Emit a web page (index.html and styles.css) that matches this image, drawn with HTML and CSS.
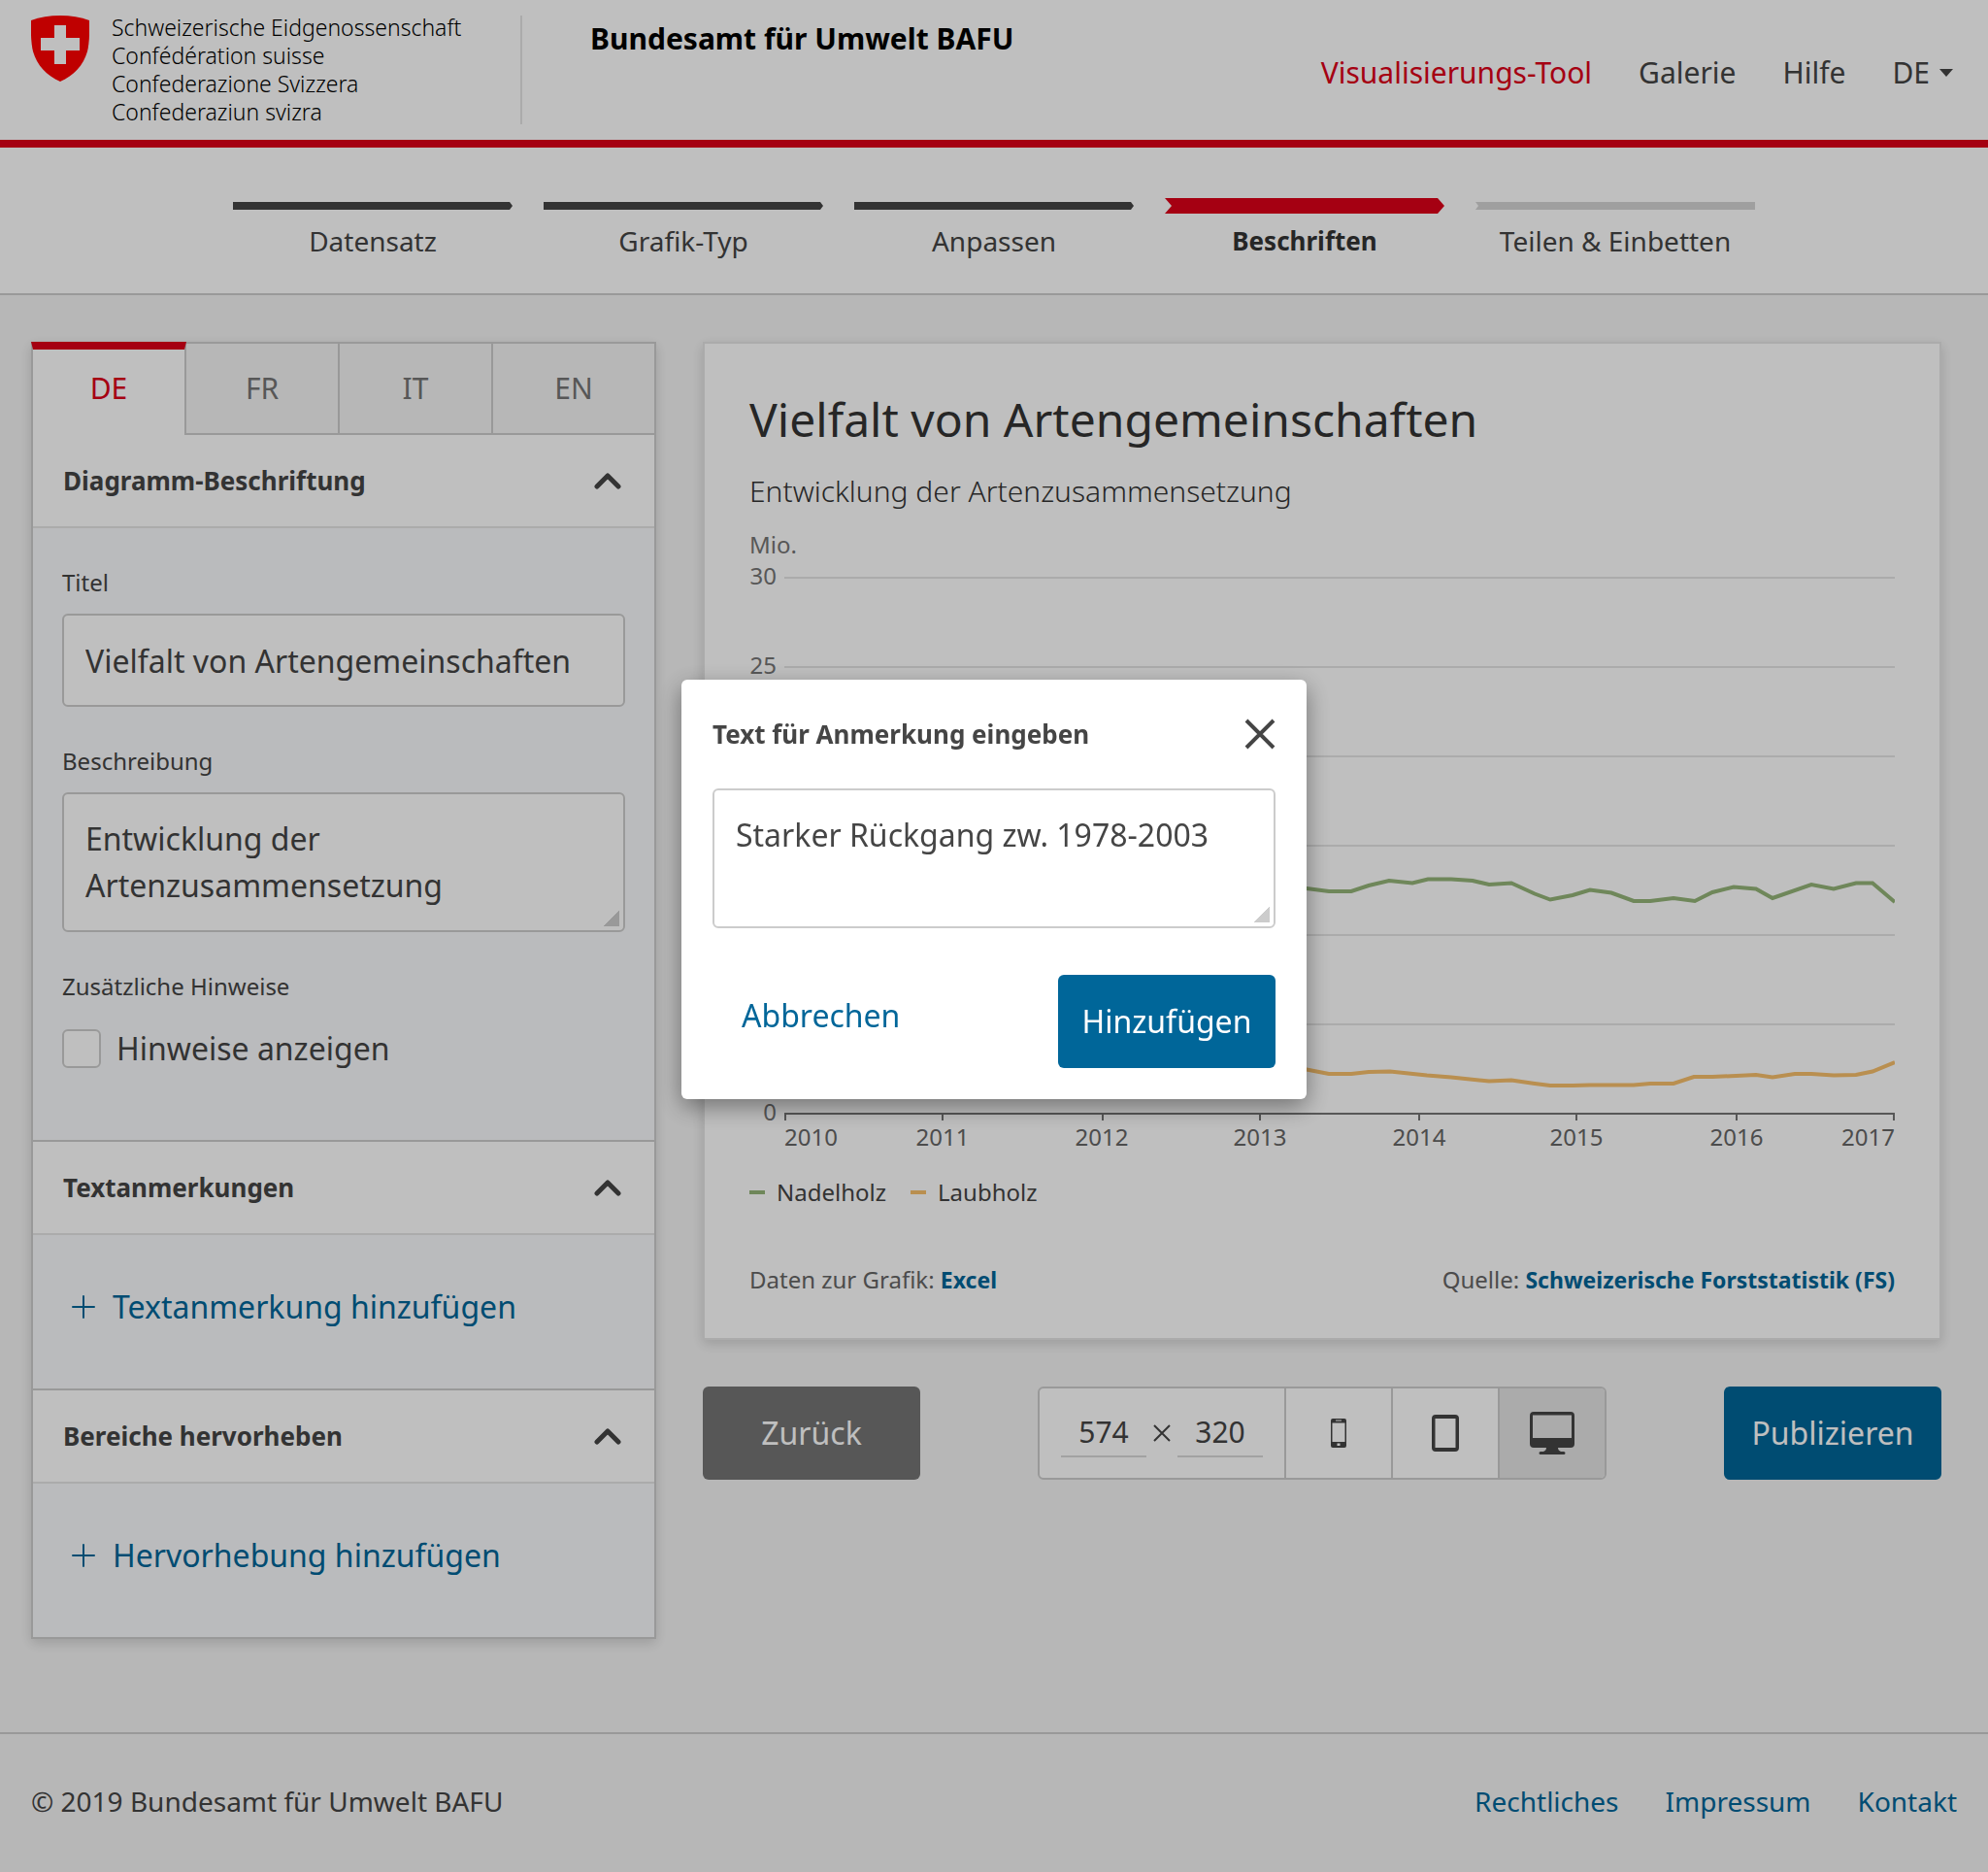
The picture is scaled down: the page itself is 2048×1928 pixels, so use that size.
FILE: index.html
```html
<!DOCTYPE html>
<html lang="de">
<head>
<meta charset="utf-8">
<meta name="viewport" content="width=device-width, initial-scale=1">
<title>Visualisierungs-Tool – Bundesamt für Umwelt BAFU</title>
<link rel="stylesheet" href="styles.css">
</head>
<body>
<header class="header">
  <div class="brand">
    <svg class="brand-shield" viewBox="0 0 60 68" aria-hidden="true">
      <path fill="#ff0000" d="M0 5C9 1.500 19 0 30 0s21 1.500 30 5c.3 11 .2 23-2 32-4 14-14 25-28 31C16 62 6 51 2 37-.2 28-.3 16 0 5z"/>
      <path fill="#fff" d="M24 10h12v13h14v13H36v14H24V36H10V23h14z"/>
    </svg>
    <p class="brand-names"><span>Schweizerische Eidgenossenschaft<br>Confédération suisse<br>Confederazione Svizzera<br>Confederaziun svizra</span></p>
    <p class="brand-office">Bundesamt für Umwelt BAFU</p>
  </div>
  <nav class="nav" aria-label="Hauptnavigation">
    <a class="nav-link nav-link-active" href="#">Visualisierungs-Tool</a>
    <a class="nav-link" href="#">Galerie</a>
    <a class="nav-link" href="#">Hilfe</a>
    <button class="nav-link nav-lang" type="button">DE<svg class="nav-caret" viewBox="0 0 14 8" aria-hidden="true"><path d="M0 0h14L7 8z"/></svg></button>
  </nav>
</header>

<ol class="steps">
  <li class="step"><svg class="step-bar" viewBox="0 0 288 16" preserveAspectRatio="none" aria-hidden="true"><path fill="#454545" d="M0 4h285l3 4-3 4H0z"/></svg>Datensatz</li>
  <li class="step"><svg class="step-bar" viewBox="0 0 288 16" preserveAspectRatio="none" aria-hidden="true"><path fill="#454545" d="M0 4h285l3 4-3 4H0z"/></svg>Grafik-Typ</li>
  <li class="step"><svg class="step-bar" viewBox="0 0 288 16" preserveAspectRatio="none" aria-hidden="true"><path fill="#454545" d="M0 4h285l3 4-3 4H0z"/></svg>Anpassen</li>
  <li class="step step-current" aria-current="step"><svg class="step-bar" viewBox="0 0 288 16" preserveAspectRatio="none" aria-hidden="true"><path fill="#dc0018" d="M0 0h281l7 8-7 8H0l7-8z"/></svg>Beschriften</li>
  <li class="step"><svg class="step-bar" viewBox="0 0 288 16" preserveAspectRatio="none" aria-hidden="true"><path fill="#d5d5d5" d="M0 4h288v8H0l3-4z"/></svg>Teilen &amp; Einbetten</li>
</ol>

<main class="main">
  <form class="panel">
    <div class="tabs" role="tablist">
      <button class="tab tab-active" type="button" role="tab" aria-selected="true">DE</button>
      <button class="tab" type="button" role="tab" aria-selected="false">FR</button>
      <button class="tab" type="button" role="tab" aria-selected="false">IT</button>
      <button class="tab" type="button" role="tab" aria-selected="false">EN</button>
    </div>

    <section class="section">
      <button class="section-head" type="button" aria-expanded="true">Diagramm-Beschriftung<svg class="chevron" viewBox="0 0 28 18" aria-hidden="true"><path d="M3 15L14 4l11 11"/></svg></button>
      <div class="section-body fields">
        <label class="label" for="chart-title">Titel</label>
        <input class="control" id="chart-title" type="text" value="Vielfalt von Artengemeinschaften">
        <label class="label" for="chart-description">Beschreibung</label>
        <textarea class="control control-area" id="chart-description">Entwicklung der Artenzusammensetzung</textarea>
        <p class="label label-group">Zusätzliche Hinweise</p>
        <div class="check-row">
          <input class="check" id="show-hints" type="checkbox">
          <label for="show-hints">Hinweise anzeigen</label>
        </div>
      </div>
    </section>

    <section class="section">
      <button class="section-head" type="button" aria-expanded="true">Textanmerkungen<svg class="chevron" viewBox="0 0 28 18" aria-hidden="true"><path d="M3 15L14 4l11 11"/></svg></button>
      <div class="section-body actions">
        <button class="add" type="button"><svg class="plus" viewBox="0 0 24 24" aria-hidden="true"><path d="M12 1v22M1 12h22"/></svg>Textanmerkung hinzufügen</button>
      </div>
    </section>

    <section class="section">
      <button class="section-head" type="button" aria-expanded="true">Bereiche hervorheben<svg class="chevron" viewBox="0 0 28 18" aria-hidden="true"><path d="M3 15L14 4l11 11"/></svg></button>
      <div class="section-body actions">
        <button class="add" type="button"><svg class="plus" viewBox="0 0 24 24" aria-hidden="true"><path d="M12 1v22M1 12h22"/></svg>Hervorhebung hinzufügen</button>
      </div>
    </section>
  </form>

  <div class="preview">
    <article class="card">
      <h1 class="card-title">Vielfalt von Artengemeinschaften</h1>
      <p class="card-subtitle">Entwicklung der Artenzusammensetzung</p>
      <svg class="chart" viewBox="772 540 1180 648" role="img" aria-label="Liniendiagramm Nadelholz und Laubholz, 2010 bis 2017">
        <g class="chart-grid">
          <path d="M808 595h1144M808 687h1144M808 779h1144M808 871h1144M808 963h1144M808 1055h1144"/>
        </g>
        <g class="chart-scale">
          <text x="772" y="570">Mio.</text>
          <text class="end" x="800" y="602">30</text>
          <text class="end" x="800" y="694">25</text>
          <text class="end" x="800" y="786">20</text>
          <text class="end" x="800" y="878">15</text>
          <text class="end" x="800" y="970">10</text>
          <text class="end" x="800" y="1062">5</text>
          <text class="end" x="800" y="1154">0</text>
        </g>
        <path class="chart-line" stroke="#94b479" d="M809 912L850 920 900 908 950 914 1000 922 1050 916 1100 909 1150 918 1200 925 1250 914 1300 910 1346 915 1369 918 1392 918 1410 912 1431 907 1455 909.500 1471 905.500 1495 905.500 1517 907 1534 911 1557 909.500 1581 920.500 1597 926.500 1620 922 1638 916.500 1660 919.500 1683 928 1700 928 1724 925 1746 928 1764 919 1786 913.500 1809 915.500 1826 925 1866 911 1889 915.500 1912 909.500 1929 909.500 1952 929"/>
        <path class="chart-line" stroke="#f7bf6b" d="M809 1090L870 1096 940 1092 1010 1100 1080 1104 1150 1098 1220 1102 1290 1094 1346 1101.500 1369 1106 1392 1106 1410 1104 1432 1103.500 1470 1107.500 1495 1109.500 1534 1113.500 1557 1112.500 1581 1116 1597 1118 1620 1118 1638 1117.500 1683 1117.500 1700 1116 1724 1116 1745 1109 1764 1109 1809 1107 1826 1109.500 1849 1106 1866 1106 1889 1107.500 1912 1107 1929 1103.500 1952 1094"/>
        <path class="chart-axis" d="M809 1154v-7h1142v7M971 1147v7M1136 1147v7M1298 1147v7M1462 1147v7M1624 1147v7M1789 1147v7"/>
        <g class="chart-years">
          <text class="start" x="808" y="1180">2010</text>
          <text x="971" y="1180">2011</text>
          <text x="1135" y="1180">2012</text>
          <text x="1298" y="1180">2013</text>
          <text x="1462" y="1180">2014</text>
          <text x="1624" y="1180">2015</text>
          <text x="1789" y="1180">2016</text>
          <text class="end" x="1952" y="1180">2017</text>
        </g>
      </svg>
      <ul class="legend">
        <li class="legend-item"><span class="legend-key key-conifer"></span>Nadelholz</li>
        <li class="legend-item"><span class="legend-key key-broadleaf"></span>Laubholz</li>
      </ul>
      <footer class="card-foot">
        <span>Daten zur Grafik: <a class="source" href="#">Excel</a></span>
        <span>Quelle: <a class="source" href="#">Schweizerische Forststatistik (FS)</a></span>
      </footer>
    </article>

    <div class="toolbar">
      <button class="button button-grey" type="button">Zurück</button>
      <div class="sizes">
        <div class="dimensions">
          <input class="dimension" type="text" aria-label="Breite" value="574">
          <svg class="times" viewBox="0 0 18 18" aria-hidden="true"><path d="M1 1l16 16M17 1L1 17"/></svg>
          <input class="dimension" type="text" aria-label="Höhe" value="320">
        </div>
        <button class="device" type="button" aria-label="Smartphone"><svg width="16" height="30" viewBox="0 0 16 30" aria-hidden="true"><path fill-rule="evenodd" d="M2 0h12a2 2 0 0 1 2 2v26a2 2 0 0 1-2 2H2a2 2 0 0 1-2-2V2a2 2 0 0 1 2-2zM1.500 4.500V24h13V4.500zM5 1.500v1h6v-1zM6.500 25.500v2.500h3v-2.500z"/></svg></button>
        <button class="device" type="button" aria-label="Tablet"><svg width="28" height="38" viewBox="0 0 28 38" aria-hidden="true"><path fill-rule="evenodd" d="M4 0h20a4 4 0 0 1 4 4v30a4 4 0 0 1-4 4H4a4 4 0 0 1-4-4V4a4 4 0 0 1 4-4zM3.500 4v30h21V4z"/></svg></button>
        <button class="device device-active" type="button" aria-label="Desktop" aria-pressed="true"><svg width="46" height="44" viewBox="0 0 46 44" aria-hidden="true"><path fill-rule="evenodd" d="M4 0h38a4 4 0 0 1 4 4v29a4 4 0 0 1-4 4H29c0 2 1 3 3 4h3a1.500 1.500 0 0 1 0 3H11a1.500 1.500 0 0 1 0-3h3c2-1 3-2 3-4H4a4 4 0 0 1-4-4V4a4 4 0 0 1 4-4zM3 3.500V27h40V3.500z"/></svg></button>
      </div>
      <button class="button button-blue" type="button">Publizieren</button>
    </div>
  </div>
</main>

<footer class="footer">
  <span>© 2019 Bundesamt für Umwelt BAFU</span>
  <nav class="footer-links" aria-label="Fussnavigation">
    <a href="#">Rechtliches</a>
    <a href="#">Impressum</a>
    <a href="#">Kontakt</a>
  </nav>
</footer>

<div class="overlay">
  <form class="modal" role="dialog" aria-modal="true" aria-labelledby="modal-title">
    <div class="modal-head">
      <h2 class="modal-title" id="modal-title"><label for="note-text">Text für Anmerkung eingeben</label></h2>
      <button class="close" type="button" aria-label="Schliessen"><svg viewBox="0 0 32 32" aria-hidden="true"><path d="M2 2l28 28M30 2L2 30"/></svg></button>
    </div>
    <textarea class="control control-area" id="note-text">Starker Rückgang zw. 1978-2003</textarea>
    <div class="modal-actions">
      <button class="cancel" type="button">Abbrechen</button>
      <button class="button button-blue" type="button">Hinzufügen</button>
    </div>
  </form>
</div>
</body>
</html>
```
FILE: styles.css
```css
:root {
  --text: #454545;
  --dark: #333;
  --muted: #757575;
  --red: #dc0018;
  --blue: #069;
  --line: #ccc;
  --line-light: #e5e5e5;
  --page: #f5f5f5;
  --fs-title: 48px;
  --fs-control: 32px;
  --fs-nav: 30px;
  --fs-medium: 28px;
  --fs-heading: 26px;
  --fs-small: 24px;
  --fs-tiny: 23px;
}

*,
*::before,
*::after {
  box-sizing: border-box;
}

body {
  display: flex;
  flex-direction: column;
  min-height: 100vh;
  margin: 0;
  background: var(--page);
  color: var(--text);
  font-family: "Noto Sans", "Open Sans", sans-serif;
  font-size: var(--fs-control);
  line-height: 48px;
}

h1, h2, p, ol, ul {
  margin: 0;
  padding: 0;
  font-weight: 400;
  list-style: none;
}

button, input, textarea {
  margin: 0;
  padding: 0;
  border: 0;
  border-radius: 0;
  background: none;
  color: inherit;
  font: inherit;
}

a {
  color: var(--blue);
  text-decoration: none;
}

svg {
  display: block;
  flex: none;
}

/* Header */
.header {
  display: flex;
  justify-content: space-between;
  min-height: 152px;
  padding: 16px 36px 16px 32px;
  border-bottom: 8px solid var(--red);
  background: #fff;
  font-size: var(--fs-nav);
}

.brand {
  display: flex;
  align-items: flex-start;
}

.brand-shield {
  width: 60px;
  height: 68px;
}

.brand-names {
  display: flex;
  align-items: center;
  width: 446px;
  height: 112px;
  padding-left: 23px;
  border-right: 2px solid var(--line-light);
  color: #000;
  font-size: var(--fs-tiny);
  font-weight: 300;
  line-height: 29px;
}

.brand-office {
  padding-left: 70px;
  color: #000;
  font-weight: 700;
}

.nav {
  display: flex;
  align-items: center;
  gap: 48px;
  padding-top: 6px;
}

.nav-link {
  color: var(--text);
}

.nav-link-active {
  color: var(--red);
}

.nav-lang {
  display: flex;
  align-items: center;
  gap: 10px;
}

.nav-caret {
  width: 14px;
  height: 8px;
  fill: currentColor;
}

/* Progress */
.steps {
  display: flex;
  justify-content: center;
  gap: 32px;
  padding: 52px 32px 30px;
  border-bottom: 2px solid var(--line);
  background: #fff;
  font-size: var(--fs-medium);
}

.step {
  flex: 0 1 288px;
  text-align: center;
}

.step-bar {
  width: 100%;
  height: 16px;
  margin-bottom: 4px;
}

.step-current {
  color: var(--dark);
  font-size: var(--fs-heading);
  font-weight: 700;
}

/* Page body */
.main {
  display: grid;
  grid-template-columns: 644px minmax(0, 1fr);
  align-items: start;
  gap: 48px;
  flex: 1;
  padding: 48px 48px 96px 32px;
}

.panel {
  border: 2px solid var(--line);
  border-top: 0;
  background: #fff;
  box-shadow: 0 4px 12px rgba(0, 0, 0, .15);
}

.tabs {
  display: grid;
  grid-template-columns: 158px 158px 158px 1fr;
}

.tab {
  height: 96px;
  border: 2px solid var(--line);
  border-left: 0;
  background: var(--page);
  color: var(--muted);
  font-size: var(--fs-nav);
}

.tab:last-child {
  border-right: 0;
}

.tab-active {
  margin-left: -2px;
  padding-bottom: 8px;
  border-top: 8px solid var(--red);
  border-bottom: 0;
  border-left: 2px solid var(--line);
  background: #fff;
  color: var(--red);
}

.section + .section {
  border-top: 2px solid var(--line);
}

.section-head {
  display: flex;
  align-items: center;
  justify-content: space-between;
  width: 100%;
  height: 96px;
  padding: 0 34px 0 31px;
  border-bottom: 2px solid var(--line-light);
  font-size: var(--fs-heading);
  font-weight: 700;
  text-align: left;
}

.chevron {
  width: 28px;
  height: 18px;
  fill: none;
  stroke: currentColor;
  stroke-width: 5;
  stroke-linecap: round;
  stroke-linejoin: round;
}

.section-body {
  background: #f9fafc;
}

.fields {
  display: flex;
  flex-direction: column;
  padding: 32px 30px 70px;
}

.label {
  padding-bottom: 8px;
  font-size: var(--fs-small);
}

.label-group {
  padding-bottom: 16px;
}

.control {
  width: 100%;
  height: 96px;
  margin-bottom: 32px;
  padding: 22px;
  border: 2px solid var(--line);
  border-radius: 6px;
  background: #fff;
}

.control-area {
  display: block;
  height: 144px;
  background: linear-gradient(135deg, transparent 50%, var(--line) 50%) right 4px bottom 4px / 16px 16px no-repeat #fff;
  overflow: hidden;
  resize: none;
}

.check-row {
  display: flex;
  align-items: center;
  gap: 16px;
}

.check {
  width: 40px;
  height: 40px;
  border: 2px solid var(--line);
  border-radius: 6px;
  appearance: none;
  background: #fff;
}

.actions {
  padding: 50px 40px 60px;
}

.add {
  display: flex;
  align-items: center;
  gap: 18px;
  color: var(--blue);
}

.plus {
  width: 24px;
  height: 24px;
  stroke: currentColor;
  stroke-width: 2;
  stroke-linecap: round;
}

/* Chart card */
.card {
  padding: 46px 46px 36px;
  border: 2px solid var(--line-light);
  background: #fff;
  box-shadow: 0 4px 12px rgba(0, 0, 0, .15);
}

.card-title {
  margin-bottom: 10px;
  color: var(--dark);
  font-size: var(--fs-title);
  line-height: 64px;
}

.card-subtitle {
  margin-bottom: 2px;
  color: var(--dark);
  font-size: var(--fs-nav);
  font-weight: 300;
  line-height: 64px;
}

.chart {
  width: 100%;
  height: auto;
  font-size: var(--fs-small);
}

.chart-grid {
  stroke: var(--line-light);
  stroke-width: 2;
}

.chart-scale {
  fill: var(--muted);
}

.chart-years {
  fill: #666;
  text-anchor: middle;
}

.chart .start {
  text-anchor: start;
}

.chart .end {
  text-anchor: end;
}

.chart-line {
  fill: none;
  stroke-width: 4;
}

.chart-axis {
  fill: none;
  stroke: var(--muted);
  stroke-width: 2;
}

.legend {
  display: flex;
  gap: 25px;
  padding-top: 16px;
  font-size: var(--fs-small);
}

.legend-item {
  display: flex;
  align-items: center;
  gap: 12px;
}

.legend-key {
  width: 16px;
  height: 4px;
}

.key-conifer {
  background: #94b479;
}

.key-broadleaf {
  background: #f7bf6b;
}

.card-foot {
  display: flex;
  justify-content: space-between;
  padding-top: 42px;
  color: #666;
  font-size: var(--fs-small);
}

.source {
  font-size: var(--fs-tiny);
  font-weight: 700;
}

/* Buttons under the card */
.toolbar {
  display: flex;
  justify-content: space-between;
  padding-top: 48px;
}

.button {
  width: 224px;
  height: 96px;
  border-radius: 6px;
  color: #fff;
}

.button-grey {
  background: #757575;
}

.button-blue {
  background: var(--blue);
}

.sizes {
  display: flex;
  height: 96px;
  border: 2px solid var(--line);
  border-radius: 6px;
  background: #fff;
  overflow: hidden;
}

.dimensions {
  display: flex;
  align-items: center;
  gap: 7px;
  padding: 0 22px;
}

.dimension {
  width: 88px;
  border-bottom: 2px solid #d9d9d9;
  font-size: var(--fs-nav);
  text-align: center;
}

.times {
  width: 18px;
  height: 18px;
  stroke: currentColor;
  stroke-width: 2;
}

.device {
  display: grid;
  place-items: center;
  width: 110px;
  border-left: 2px solid var(--line);
  fill: currentColor;
}

.device-active {
  background: var(--line-light);
}

/* Footer */
.footer {
  display: flex;
  align-items: center;
  justify-content: space-between;
  min-height: 144px;
  padding: 0 32px 4px;
  border-top: 2px solid var(--line);
  font-size: var(--fs-medium);
}

.footer-links {
  display: flex;
  gap: 48px;
}

/* Dialog */
.overlay {
  position: fixed;
  inset: 0;
  display: grid;
  place-items: center;
  padding-bottom: 96px;
  background: rgba(0, 0, 0, .25);
}

.modal {
  width: 644px;
  padding: 32px;
  border-radius: 6px;
  background: #fff;
  box-shadow: 0 8px 24px rgba(0, 0, 0, .4);
}

.modal-head {
  display: flex;
  align-items: center;
  justify-content: space-between;
  padding-bottom: 32px;
}

.modal-title {
  color: var(--text);
  font-size: var(--fs-heading);
  font-weight: 700;
}

.close svg {
  width: 32px;
  height: 32px;
  stroke: currentColor;
  stroke-width: 4;
}

.modal .control {
  margin-bottom: 48px;
}

.modal-actions {
  display: flex;
  align-items: flex-start;
  justify-content: space-between;
  padding-left: 30px;
}

.cancel {
  padding-top: 18px;
  color: var(--blue);
}
```
